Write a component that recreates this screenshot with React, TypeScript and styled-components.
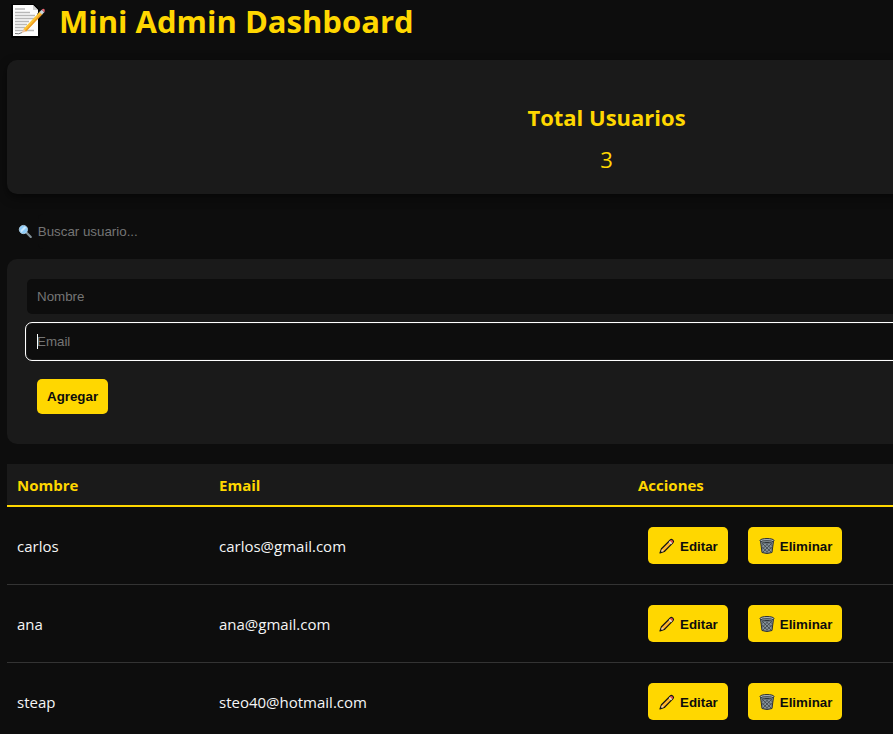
import React, { useState } from "react";
import styled, { createGlobalStyle } from "styled-components";

const GlobalStyle = createGlobalStyle`
  * { box-sizing: border-box; }
  body {
    margin: 0;
    background: #0d0d0d;
    color: #f5f5f5;
    font-family: "Open Sans", "Noto Sans", sans-serif;
    font-size: 15px;
    overflow-x: hidden;
  }
`;

const gold = "#ffd700";
const panel = "#1a1a1a";
const controlFont = '"Liberation Sans", Arial, sans-serif';

const Page = styled.main`
  min-width: 1206px;
  padding: 0 0 20px 7px;
`;

const Title = styled.h1`
  display: flex;
  align-items: center;
  gap: 11px;
  margin: 0 0 18px;
  padding-left: 3px;
  height: 42px;
  color: ${gold};
  font-size: 31px;
  font-weight: 700;
  line-height: 42px;
`;

const StatCard = styled.section`
  padding: 40px 20px 18px;
  border-radius: 10px;
  background: ${panel};
  box-shadow: 0 4px 10px rgba(0, 0, 0, 0.5);
  color: ${gold};
  text-align: center;
`;

const StatLabel = styled.h2`
  margin: 0 0 8px;
  font-size: 22px;
  font-weight: 700;
  line-height: 34px;
`;

const StatValue = styled.p`
  margin: 0;
  font-size: 22px;
  line-height: 34px;
`;

const SearchBar = styled.label`
  display: flex;
  align-items: center;
  gap: 5px;
  margin: 20px 0 11px;
  padding: 0 11px;
  height: 34px;
`;

const Input = styled.input`
  display: block;
  width: 100%;
  height: 35px;
  padding: 0 10px;
  border: 0;
  border-radius: 5px;
  background: #0d0d0d;
  color: #ffffff;
  font-family: ${controlFont};
  &::placeholder { color: #757575; opacity: 1; }
  &:focus { outline: 1px solid #ffffff; outline-offset: 1px; }
`;

const SearchInput = styled(Input)`
  padding: 0;
  &:focus { outline: 0; }
`;

const Form = styled.form`
  padding: 20px 20px 30px;
  border-radius: 10px;
  background: ${panel};
`;

const Field = styled.div`
  position: relative;
  margin-bottom: 10px;
`;

const Caret = styled.span`
  position: absolute;
  left: 10px;
  top: 10px;
  width: 1px;
  height: 15px;
  background: #ffffff;
`;

const Button = styled.button`
  display: inline-flex;
  align-items: center;
  gap: 4px;
  margin: 0 10px;
  padding: 2px 10px 0;
  height: 37px;
  border: 0;
  border-radius: 5px;
  background: ${gold};
  color: #0d0d0d;
  font-family: ${controlFont};
  font-weight: 700;
  cursor: pointer;
`;

const SubmitButton = styled(Button)`
  display: flex;
  margin-top: 20px;
  padding: 0 10px;
  height: 35px;
`;

const Table = styled.table`
  width: 100%;
  margin-top: 20px;
  border-collapse: collapse;
  table-layout: fixed;
`;

const HeadCell = styled.th<{ $width?: number }>`
  width: ${(p) => (p.$width ? `${p.$width}px` : "auto")};
  height: 42px;
  padding: 0 10px;
  border-bottom: 2px solid ${gold};
  background: ${panel};
  color: ${gold};
  font-weight: 700;
  text-align: left;
`;

const Cell = styled.td`
  height: 78px;
  padding: 2px 10px 0;
  border-bottom: 1px solid #333333;
`;

const ActionCell = styled(Cell)`
  padding: 0 10px;
`;

const Actions = styled.div`
  display: flex;
`;

const MemoIcon = () => (
  <svg width="38" height="36" viewBox="0 0 38 36" aria-hidden="true">
    <path d="M1 1h23l6 6v28H1z" fill="#000" />
    <path d="M3 2h20l5 5v26H3z" fill="#fcfcfc" />
    <path d="M23 2v5h5z" fill="#cfcfcf" />
    <path d="M5 6h10M5 9.500h15M5 12.500h20M5 15.500h20M5 18.500h14M5 21.500h12M5 24.500h10M5 27.500h19" stroke="#b8b8b8" strokeWidth="1.300" />
    <path d="M5 30.500q4 1 7-1" stroke="#777" fill="none" />
    <path d="M27 11l5-5 3 3-7 7z" fill="#1b1b1b" />
    <path d="M13.500 26L30 8.500l2.500 2.500L16 28.500z" fill="#fcc433" />
    <path d="M15 27.500L31.500 10l1 1L16 28.500z" fill="#ee9a24" />
    <path d="M11.500 30l2-4 2.500 2.500z" fill="#eec0a0" />
    <path d="M29.500 9l2.300-2.300 2.500 2.500L32 11.500z" fill="#c9d4dc" />
    <path d="M31.800 6.700l.8-.8q2.300-.8 2.200 2.300l-.6 1z" fill="#e86672" />
  </svg>
);

const SearchIcon = () => (
  <svg width="15" height="15" viewBox="0 0 15 15" aria-hidden="true">
    <path d="M8.500 8.500l4.500 4.500" stroke="#84939b" strokeWidth="2.200" strokeLinecap="round" />
    <circle cx="5.500" cy="5.500" r="4.200" fill="#8dccfa" stroke="#b9d9ed" strokeWidth="0.800" />
    <path d="M2.500 6.500l4-4 2 1-5 5z" fill="#c9e8ff" />
  </svg>
);

const PencilIcon = () => (
  <svg width="18" height="18" viewBox="0 0 18 18" aria-hidden="true">
    <path d="M2 16l1.500-4.300L12.300 3q1-1 2.200 0l.5.500q1 1.200 0 2.200L6.300 14.500z" fill="#ffb52b" stroke="#141414" strokeWidth="1.200" strokeLinejoin="round" />
    <path d="M2.700 15.300l1.200-3 1.800 1.800z" fill="#f2cfae" />
    <path d="M10.800 4.900l2.300 2.300 1-1-2.300-2.300z" fill="#dce3e8" />
    <path d="M12 3.600q1.200-1.200 2.200-.2l.5.500q.9 1 -.3 2.100z" fill="#dc4259" />
    <path d="M2 16l.7-2 1.300 1.300z" fill="#141414" />
  </svg>
);

const TrashIcon = () => (
  <svg width="18" height="18" viewBox="0 0 18 18" aria-hidden="true">
    <path d="M2.500 4h13L14 15.500q-5 2-10 0z" fill="#84919a" stroke="#2b3034" />
    <path d="M4 6l9 9M7 5.500l7 7M3.700 9.500l6 6M11 5.500l3.500 3.500M14 6l-9 9M11 5.500l-7 7M14.300 9.500l-6 6M7 5.500L3.500 9" stroke="#3b4347" strokeWidth="0.800" />
    <ellipse cx="9" cy="3.500" rx="7" ry="2" fill="#a8b3ba" stroke="#2b3034" />
    <ellipse cx="9" cy="3.700" rx="5" ry="0.800" fill="#4b5459" />
  </svg>
);

const users = [
  { name: "carlos", email: "carlos@gmail.com" },
  { name: "ana", email: "ana@gmail.com" },
  { name: "steap", email: "steo40@hotmail.com" },
];

export default function App() {
  const [email, setEmail] = useState("");
  return (
    <>
      <GlobalStyle />
      <Page>
        <Title>
          <MemoIcon />
          Mini Admin Dashboard
        </Title>
        <StatCard>
          <StatLabel>Total Usuarios</StatLabel>
          <StatValue>{users.length}</StatValue>
        </StatCard>
        <SearchBar>
          <SearchIcon />
          <SearchInput type="search" placeholder="Buscar usuario..." aria-label="Buscar usuario" />
        </SearchBar>
        <Form onSubmit={(e) => e.preventDefault()}>
          <Field>
            <Input type="text" placeholder="Nombre" aria-label="Nombre" />
          </Field>
          <Field>
            <Input
              type="email"
              placeholder="Email"
              aria-label="Email"
              autoFocus
              value={email}
              onChange={(e) => setEmail(e.target.value)}
            />
            {email === "" && <Caret />}
          </Field>
          <SubmitButton type="submit">Agregar</SubmitButton>
        </Form>
        <Table>
          <thead>
            <tr>
              <HeadCell $width={202}>Nombre</HeadCell>
              <HeadCell $width={419}>Email</HeadCell>
              <HeadCell>Acciones</HeadCell>
            </tr>
          </thead>
          <tbody>
            {users.map((user) => (
              <tr key={user.email}>
                <Cell>{user.name}</Cell>
                <Cell>{user.email}</Cell>
                <ActionCell>
                  <Actions>
                    <Button type="button">
                      <PencilIcon />
                      Editar
                    </Button>
                    <Button type="button">
                      <TrashIcon />
                      Eliminar
                    </Button>
                  </Actions>
                </ActionCell>
              </tr>
            ))}
          </tbody>
        </Table>
      </Page>
    </>
  );
}
